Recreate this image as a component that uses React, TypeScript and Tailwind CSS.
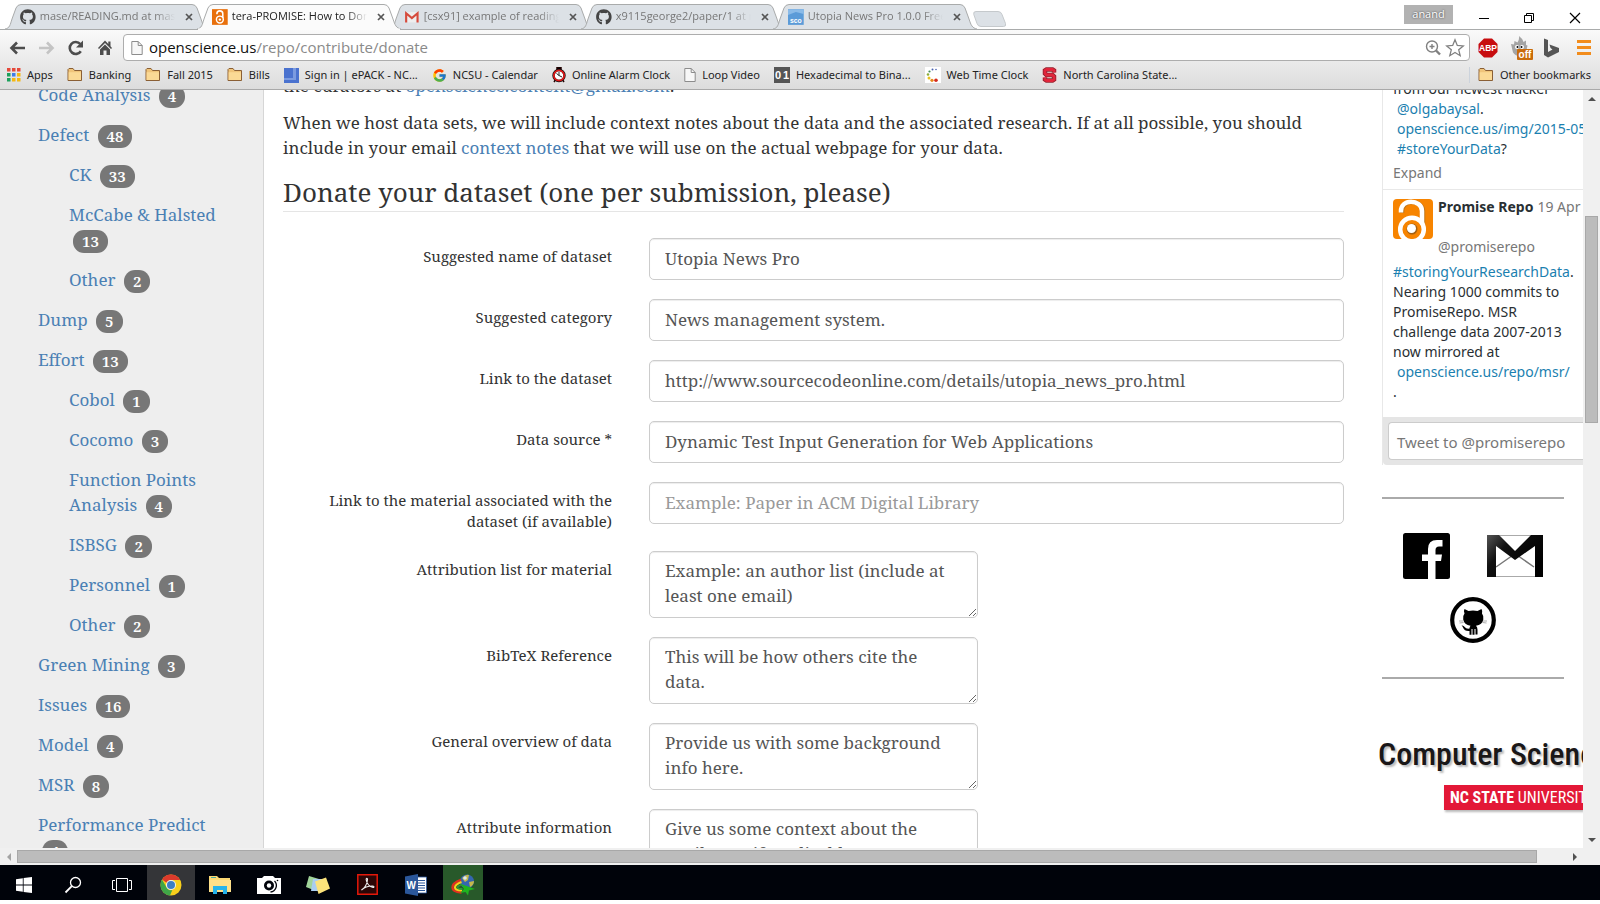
import React from 'react';
import { FaGithub } from 'react-icons/fa';
import { FcGoogle } from 'react-icons/fc';

/* ---------- small shared icons ---------- */

function FolderIcon() {
  return (
    <svg width="16" height="16" viewBox="0 0 16 16" aria-hidden="true">
      <path d="M1 4.500V2.500L2 1.500H6L7.500 3.500H14.500V13.500H1z" fill="#f0c47a" stroke="#8a5f35" strokeLinejoin="round" />
      <path d="M1.600 5.200h12.400v7.800H1.600z" fill="#fbd995" />
    </svg>
  );
}

function PageIcon() {
  return (
    <svg width="12" height="16" viewBox="0 0 12 16" aria-hidden="true">
      <path d="M.8 1.500h6.400l4 4v9H.8z" fill="#f7f7f7" stroke="#8c8c8c" />
      <path d="M7.200 1.500v4h4" fill="none" stroke="#8c8c8c" />
    </svg>
  );
}

function Avatar() {
  return (
    <svg className="rounded" width="40" height="40" viewBox="0 0 40 40" aria-hidden="true">
      <rect width="40" height="40" fill="#f78400" />
      <path d="M9 14V12.500C9 6.500 13.500 3 19 3S30 6.500 30 12.500V27" fill="none" stroke="#9a6a2a" strokeWidth="4.500" opacity=".6" />
      <path d="M8 13.500V12C8 6 12.500 2.800 18 2.800S29 6 29 12V27" fill="none" stroke="#fff" strokeWidth="4.500" />
      <circle cx="19" cy="30.500" r="11.800" fill="#f78400" stroke="#fff" strokeWidth="4.500" />
      <circle cx="19" cy="30" r="5.500" fill="#6a4a20" opacity=".6" />
      <circle cx="18.500" cy="29.500" r="4.500" fill="#fff" />
    </svg>
  );
}

function TabLockIcon() {
  return (
    <svg width="16" height="16" viewBox="0 0 16 16" aria-hidden="true">
      <rect width="16" height="16" fill="#e8700c" />
      <path d="M5 5.200V4.600a3 2.800 0 0 1 6 0V9" fill="none" stroke="#fff" strokeWidth="1.600" />
      <circle cx="8" cy="10.600" r="3.500" fill="none" stroke="#fff" strokeWidth="1.500" />
      <circle cx="8" cy="10.600" r="1.200" fill="#fff" />
    </svg>
  );
}

function GmailTabIcon() {
  return (
    <svg width="16" height="16" viewBox="0 0 16 16" aria-hidden="true">
      <path d="M1 3h14v10.500H1z" fill="#eee" />
      <path d="M2.200 13.500V4.200L8 9l5.800-4.800v9.300" fill="none" stroke="#d54b3d" strokeWidth="2.200" />
    </svg>
  );
}

function ScoIcon() {
  return (
    <svg width="16" height="16" viewBox="0 0 16 16" aria-hidden="true">
      <rect width="16" height="16" fill="#5b9bd8" />
      <path d="M0 0h16v5L8 3 0 6z" fill="#8bbbe8" />
      <text x="2" y="14" fontSize="7" fontWeight="700" fill="#fff" fontFamily="Liberation Sans, sans-serif">sco</text>
    </svg>
  );
}

/* ---------- tab strip ---------- */

const tabs = [
  { title: 'mase/READING.md at master', icon: <FaGithub size={16} color="#444" /> },
  { title: 'tera-PROMISE: How to Donate', icon: <TabLockIcon />, active: true },
  { title: '[csx91] example of reading', icon: <GmailTabIcon /> },
  { title: 'x9115george2/paper/1 at master', icon: <FaGithub size={16} color="#444" /> },
  { title: 'Utopia News Pro 1.0.0 Free', icon: <ScoIcon /> },
];

function TabStrip() {
  return (
    <div className="flex h-[30px] shrink-0 items-end border-b border-[#a9abab] bg-white pl-[5px]">
      {tabs.map((t) => (
        <div key={t.title} className={t.active ? 'relative z-10 h-[25px] w-48' : 'relative h-[25px] w-48'}>
          <svg className="absolute left-0 top-0" width="206" height="26" viewBox="0 0 206 26" aria-hidden="true">
            <path
              d="M0 25C5 24 5 21 7 15L11 4Q12.500.5 16 .5H187Q190.500.5 192 4L196 15C198 21 199 24 204 25"
              fill={t.active ? '#fbfbfb' : '#dce1e6'}
              stroke="#a9abab"
            />
            {t.active && <path d="M1 25.500H203" stroke="#fbfbfb" strokeWidth="2" />}
          </svg>
          <div className="relative flex h-full items-center pl-[15px]">
            {t.icon}
            <span
              className={
                t.active
                  ? 'ml-1 w-[138px] overflow-hidden whitespace-nowrap text-[#222] [mask-image:linear-gradient(to_right,#000_85%,transparent)]'
                  : 'ml-1 w-[138px] overflow-hidden whitespace-nowrap text-[#777] [mask-image:linear-gradient(to_right,#000_85%,transparent)]'
              }
            >
              {t.title}
            </span>
            <button aria-label="Close tab" className="ml-1.5 flex size-4 items-center justify-center">
              <svg width="8" height="8" viewBox="0 0 8 8" aria-hidden="true">
                <path d="M1 1l6 6M7 1 1 7" stroke="#555" strokeWidth="1.700" />
              </svg>
            </button>
          </div>
        </div>
      ))}
      <button aria-label="New tab" className="mb-0.5 ml-2">
        <svg width="34" height="16" viewBox="0 0 34 16" aria-hidden="true">
          <path d="M3 .5h22q3 0 4 3l3.500 9q1 3-2 3H8q-3 0-4-3L.8 3.500Q0 .5 3 .5z" fill="#dce1e6" stroke="#c5c9cc" />
        </svg>
      </button>
      <div className="ml-auto flex h-[29px] items-center pr-[17px]">
        <button className="mb-px h-[19px] w-[49px] bg-[#b2b2b2] text-[11px] leading-[18px] text-white [text-shadow:0_0_2px_#333]">anand</button>
        <button aria-label="Minimize" className="mt-1.5 ml-[23px] size-4">
          <svg width="16" height="16" viewBox="0 0 16 16" aria-hidden="true"><path d="M3 8.500h10" stroke="#000" /></svg>
        </button>
        <button aria-label="Restore" className="mt-1.5 ml-[29px] size-4">
          <svg width="16" height="16" viewBox="0 0 16 16" fill="none" stroke="#000" aria-hidden="true"><path d="M3.500 5.500h7v7h-7zM5.500 5.500v-2h7v7h-2" /></svg>
        </button>
        <button aria-label="Close" className="mt-1.5 ml-[30px] size-4">
          <svg width="16" height="16" viewBox="0 0 16 16" aria-hidden="true"><path d="M3 3l10 10M13 3 3 13" stroke="#000" strokeWidth="1.200" /></svg>
        </button>
      </div>
    </div>
  );
}

/* ---------- toolbar ---------- */

function Toolbar() {
  return (
    <div className="flex h-[35px] shrink-0 items-center pr-[9px] pl-[7px]">
      <div className="flex w-[116px] items-center gap-[9px] pl-px">
        <button aria-label="Back" className="size-5">
          <svg width="20" height="20" viewBox="0 0 20 20" fill="none" stroke="#4d4d4d" strokeWidth="2.600" aria-hidden="true"><path d="M17 10H4M9 4.500 3.500 10 9 15.500" /></svg>
        </button>
        <button aria-label="Forward" className="size-5">
          <svg width="20" height="20" viewBox="0 0 20 20" fill="none" stroke="#c4c4c4" strokeWidth="2.600" aria-hidden="true"><path d="M2 10h13M10 4.500l5.500 5.500-5.500 5.500" /></svg>
        </button>
        <button aria-label="Reload" className="size-5">
          <svg width="20" height="20" viewBox="0 0 20 20" aria-hidden="true"><path d="M14.800 13.200A6 6 0 1 1 14.300 6" fill="none" stroke="#4d4d4d" strokeWidth="2.600" /><path d="M17 2.500v7h-7z" fill="#4d4d4d" /></svg>
        </button>
        <button aria-label="Home" className="size-5">
          <svg width="20" height="20" viewBox="0 0 20 20" fill="#4d4d4d" aria-hidden="true"><path d="M10 2.500 3 10l1 1 6-6 6 6 1-1-1.500-1.700V3.500h-2.200v2.600z" /><path d="M10 6.500 5 11.500V17h3.500v-4.500h3V17H15v-5.500z" /></svg>
        </button>
      </div>
      <div className="flex h-[27px] min-w-0 flex-1 items-center rounded-sm border border-[#adadad] bg-white pr-1 pl-[7px]">
        <PageIcon />
        <div className="relative ml-1.5 h-full flex-1">
          <div className="pointer-events-none absolute inset-0 flex items-center text-[15px] text-[#8a8a8a]" aria-hidden="true">
            <span className="text-[#111]">openscience.us</span>/repo/contribute/donate
          </div>
          <input aria-label="Address" defaultValue="openscience.us/repo/contribute/donate" className="h-full w-full bg-transparent text-[15px] text-transparent outline-none" />
        </div>
        <svg width="18" height="18" viewBox="0 0 18 18" fill="none" stroke="#808080" strokeWidth="1.400" aria-hidden="true"><circle cx="8" cy="7.500" r="5.500" /><path d="M8 5v5M5.500 7.500h5" /><path d="M12 11.500l4 4" strokeWidth="2.400" /></svg>
        <svg className="ml-[3px]" width="20" height="20" viewBox="0 0 20 20" fill="#fff" stroke="#808080" strokeWidth="1.300" aria-hidden="true"><path d="M10 1.800l2.300 5.600 6 .5-4.600 3.900 1.500 5.900-5.200-3.200-5.200 3.200 1.500-5.900L1.700 7.900l6-.5z" /></svg>
      </div>
      <button aria-label="Adblock Plus" className="ml-2 size-5">
        <svg width="20" height="20" viewBox="0 0 20 20" aria-hidden="true"><path d="M6 .5h8L19.500 6v8L14 19.500H6L.5 14V6z" fill="#c70d0f" /><text x="10" y="13" textAnchor="middle" fontSize="8.500" fontWeight="700" fill="#fff" fontFamily="Liberation Sans, sans-serif">ABP</text></svg>
      </button>
      <button aria-label="Extension off" className="ml-3 h-6 w-6">
        <svg width="24" height="24" viewBox="0 0 24 24" aria-hidden="true">
          <path d="M1 8l3 .5L4.500 5l3 1.500Q9.500 4 9 0q4 3 4.500 6L16 4.500 16 9l1.500.5-1.500 7q-2.500 3.500-6.500 3.500T3 16.500z" fill="#a4a4a4" />
          <circle cx="7" cy="11" r="2" fill="#fff" /><circle cx="12" cy="11" r="2" fill="#fff" /><circle cx="7.500" cy="11" r="1" /><circle cx="11.500" cy="11" r="1" />
          <rect x="7" y="13" width="16" height="11" rx="1" fill="#c96b0a" />
          <text x="15" y="22" textAnchor="middle" fontSize="10" fontWeight="700" fill="#fff" fontFamily="Liberation Sans, sans-serif">off</text>
        </svg>
      </button>
      <button aria-label="Bing" className="ml-2 size-5">
        <svg width="20" height="20" viewBox="0 0 20 20" fill="#555" aria-hidden="true"><path d="M2 .5l4 1.500v12L2 17zM6 14l4.500-2.600L8.500 10 7.500 6.500 17 10v4L6 19.500 2 17z" /></svg>
      </button>
      <button aria-label="Menu" className="ml-[15px] flex h-5 w-[14px] flex-col justify-center gap-[3px]">
        <span className="h-[3px] bg-[#f28c1c]" /><span className="h-[3px] bg-[#f28c1c]" /><span className="h-[3px] bg-[#f28c1c]" />
      </button>
    </div>
  );
}

/* ---------- bookmarks bar ---------- */

const appColors = ['#e5493a', '#e5493a', '#e5493a', '#1ba05b', '#3f7de8', '#f5b811', '#1ba05b', '#f5b811', '#f5b811'];

const bookmarks = [
  {
    label: 'Apps',
    icon: (
      <svg width="14" height="14" viewBox="0 0 14 14" aria-hidden="true">
        {appColors.map((c, i) => <rect key={i} x={(i % 3) * 5} y={Math.floor(i / 3) * 5} width="3.500" height="3.500" fill={c} />)}
      </svg>
    ),
  },
  { label: 'Banking', icon: <FolderIcon /> },
  { label: 'Fall 2015', icon: <FolderIcon /> },
  { label: 'Bills', icon: <FolderIcon /> },
  {
    label: 'Sign in | ePACK - NC...',
    icon: <svg width="15" height="15" viewBox="0 0 15 15" aria-hidden="true"><path d="M0 0h15v15H0z" fill="#4a72cf" /><path d="M9 0h3v12H0v-2h9z" fill="#7b9be0" /></svg>,
  },
  { label: 'NCSU - Calendar', icon: <FcGoogle size={15} /> },
  {
    label: 'Online Alarm Clock',
    icon: (
      <svg width="14" height="16" viewBox="0 0 14 16" aria-hidden="true">
        <path d="M5 0h4v3H5zM2 15l2-3M12 15l-2-3" stroke="#200" strokeWidth="1.500" />
        <circle cx="7" cy="8.500" r="5.500" fill="#fff" stroke="#111" strokeWidth="2.400" />
        <circle cx="7" cy="8.500" r="5.200" fill="none" stroke="#e01818" strokeWidth="1.700" />
        <path d="M7 5v3.500l3 1.500M4.500 6.500 7 8.500" fill="none" stroke="#222" />
      </svg>
    ),
  },
  { label: 'Loop Video', icon: <PageIcon /> },
  {
    label: 'Hexadecimal to Bina...',
    icon: <svg width="16" height="16" viewBox="0 0 16 16" aria-hidden="true"><path d="M0 0h16v16H0z" fill="#555" /><text x="1" y="12" fontSize="11" fontWeight="700" fill="#fff" fontFamily="Liberation Sans, sans-serif">0</text><text x="9" y="12" fontSize="11" fontWeight="700" fill="#fff" fontFamily="Liberation Sans, sans-serif">1</text></svg>,
  },
  {
    label: 'Web Time Clock',
    icon: (
      <svg width="16" height="16" viewBox="0 0 16 16" aria-hidden="true">
        <path d="M0 0h16v16H0z" fill="#fff" />
        <circle cx="11" cy="2.500" r=".8" fill="#4a62b0" /><circle cx="7.500" cy="2.500" r="1" fill="#4a62b0" /><circle cx="4.500" cy="4.500" r="1.100" fill="#3f8a5a" />
        <circle cx="3" cy="7.500" r="1.300" fill="#8cae3a" /><circle cx="4" cy="11" r="1.500" fill="#e8c21c" /><circle cx="7" cy="13.300" r="1.600" fill="#e88a1c" /><circle cx="11" cy="13.300" r="1.800" fill="#d52b1e" />
      </svg>
    ),
  },
  {
    label: 'North Carolina State...',
    icon: (
      <svg width="15" height="16" viewBox="0 0 15 16" aria-hidden="true">
        <path d="M0 0h15v16H0z" fill="#f4dcdc" />
        <path d="M12 5.500V3.500L10.500 2.500h-6L3 3.500v3L4.500 8h6L12 9.500v3l-1.500 1h-6L3 12.500v-2" fill="none" stroke="#8a2530" strokeWidth="4.500" />
        <path d="M12 5.500V3.500L10.500 2.500h-6L3 3.500v3L4.500 8h6L12 9.500v3l-1.500 1h-6L3 12.500v-2" fill="none" stroke="#e2253a" strokeWidth="2.800" />
      </svg>
    ),
  },
];

function BookmarksBar() {
  return (
    <nav className="flex h-[25px] shrink-0 items-center border-b border-[#a9a9a9] pb-1 pl-[7px] font-['Noto_Sans','Open_Sans',sans-serif] text-[11px] text-[#222]">
      <div className="flex items-center gap-[14px]">
        {bookmarks.map((b) => (
          <a key={b.label} href="#" className="flex h-4 items-center gap-1.5 whitespace-nowrap">
            {b.icon}
            <span>{b.label}</span>
          </a>
        ))}
      </div>
      <a href="#" className="mr-[9px] ml-auto flex h-4 items-center gap-1.5 border-l border-[#ccd3dc] pl-2">
        <FolderIcon />
        <span>Other bookmarks</span>
      </a>
    </nav>
  );
}

/* ---------- left category list ---------- */

const categories: { name: string; count: number; sub?: boolean }[] = [
  { name: 'Code Analysis', count: 4 },
  { name: 'Defect', count: 48 },
  { name: 'CK', count: 33, sub: true },
  { name: 'McCabe & Halsted', count: 13, sub: true },
  { name: 'Other', count: 2, sub: true },
  { name: 'Dump', count: 5 },
  { name: 'Effort', count: 13 },
  { name: 'Cobol', count: 1, sub: true },
  { name: 'Cocomo', count: 3, sub: true },
  { name: 'Function Points Analysis', count: 4, sub: true },
  { name: 'ISBSG', count: 2, sub: true },
  { name: 'Personnel', count: 1, sub: true },
  { name: 'Other', count: 2, sub: true },
  { name: 'Green Mining', count: 3 },
  { name: 'Issues', count: 16 },
  { name: 'Model', count: 4 },
  { name: 'MSR', count: 8 },
  { name: 'Performance Predict', count: 4 },
];

function Sidebar() {
  return (
    <aside className="w-[264px] shrink-0 overflow-hidden border-r border-[#d6d6d6] bg-[#eee]">
      <ul className="-mt-2 flex flex-col gap-[15px] pr-6 pl-[38px]">
        {categories.map((c, i) => (
          <li key={i} className={c.sub ? 'pl-[31px]' : ''}>
            <a href="#" className="block text-[#4a80b4]">
              {c.name}{' '}
              <span className="-my-1 ml-1 inline-block rounded-[11px] bg-[#777] px-[9px] text-center align-middle text-[15px] leading-[23px] font-semibold text-white">{c.count}</span>
            </a>
          </li>
        ))}
      </ul>
    </aside>
  );
}

/* ---------- donation form ---------- */

const fields = [
  { id: 'name', label: 'Suggested name of dataset', value: 'Utopia News Pro' },
  { id: 'category', label: 'Suggested category', value: 'News management system.' },
  { id: 'link', label: 'Link to the dataset', value: 'http://www.sourcecodeonline.com/details/utopia_news_pro.html' },
  { id: 'source', label: 'Data source *', value: 'Dynamic Test Input Generation for Web Applications' },
  { id: 'material', label: 'Link to the material associated with the dataset (if available)', placeholder: 'Example: Paper in ACM Digital Library' },
];

const areas = [
  { id: 'attribution', label: 'Attribution list for material', value: 'Example: an author list (include at least one email)' },
  { id: 'bibtex', label: 'BibTeX Reference', value: 'This will be how others cite the data.' },
  { id: 'overview', label: 'General overview of data', value: 'Provide us with some background info here.' },
  { id: 'attributes', label: 'Attribute information', value: 'Give us some context about the attributes, if applicable.' },
];

function DonateForm() {
  return (
    <form className="mt-[26px]">
      {fields.map((f) => (
        <div key={f.id} className="mb-[19px] flex items-start gap-[37px]">
          <label htmlFor={f.id} className="w-[329px] shrink-0 pt-2 pl-[30px] text-right text-[15px] leading-[21px]">{f.label}</label>
          <input
            id={f.id}
            defaultValue={f.value}
            placeholder={f.placeholder}
            className="h-[42px] min-w-0 flex-1 rounded-[5px] border border-[#ccc] bg-white px-[15px] pb-[2px] text-[#555] shadow-[inset_0_1px_1px_rgba(0,0,0,0.075)] placeholder:text-[#999]"
          />
        </div>
      ))}
      {areas.map((f) => (
        <div key={f.id} className="mb-[19px] flex items-start gap-[37px]">
          <label htmlFor={f.id} className="w-[329px] shrink-0 pt-2 text-right text-[15px] leading-[21px]">{f.label}</label>
          <textarea
            id={f.id}
            defaultValue={f.value}
            className="block h-[67px] w-[329px] resize overflow-hidden rounded-[5px] border border-[#ccc] bg-white py-1.5 pr-6 pl-[15px] leading-[25px] text-[#555] shadow-[inset_0_1px_1px_rgba(0,0,0,0.075)]"
          />
        </div>
      ))}
    </form>
  );
}

function Main() {
  return (
    <main className="min-w-0 flex-1 overflow-hidden pl-[19px]">
      <p className="-mt-[17px] mb-3">the curators at <a href="#" className="text-[#4a80b4]">openscience.content@gmail.com</a>.</p>
      <p className="mb-3">
        When we host data sets, we will include context notes about the data and the associated research. If at all possible, you should
        include in your email <a href="#" className="text-[#4a80b4]">context notes</a> that we will use on the actual webpage for your data.
      </p>
      <h2 className="border-b border-[#e5e5e5] pt-px text-[26px] leading-[38px]">Donate your dataset (one per submission, please)</h2>
      <DonateForm />
    </main>
  );
}

/* ---------- right column ---------- */

function RightColumn() {
  return (
    <aside className="w-[205px] shrink-0 overflow-hidden pl-1">
      <section className="border-l border-[#e8e8e8] font-['Noto_Sans','Open_Sans',sans-serif] text-[14px] leading-5 whitespace-nowrap text-[#292f33]">
        <div className="border-b border-[#e8e8e8] pb-[6px] pl-[10px]">
          <p className="-mt-[11px]">from our newest hacker</p>
          <p className="pl-1"><a href="#" className="text-[#1b7fb0]">@olgabaysal</a>.</p>
          <p className="pl-1"><a href="#" className="text-[#1b7fb0]">openscience.us/img/2015-05</a></p>
          <p className="pl-1"><a href="#" className="text-[#1b7fb0]">#storeYourData</a>?</p>
          <p className="mt-1"><a href="#" className="text-[#777]">Expand</a></p>
        </div>
        <div className="pt-[9px] pl-[10px]">
          <div className="flex h-[63px] gap-[5px]">
            <Avatar />
            <div className="flex-1">
              <div className="mt-[-2px] flex items-baseline gap-1"><b className="font-bold">Promise Repo</b><span className="text-[#777]">19 Apr</span></div>
              <div className="mt-5 text-[#777]">@promiserepo</div>
            </div>
          </div>
          <p><a href="#" className="text-[#1b7fb0]">#storingYourResearchData</a>.</p>
          <p>Nearing 1000 commits to<br />PromiseRepo. MSR<br />challenge data 2007-2013<br />now mirrored at</p>
          <p className="pl-1"><a href="#" className="text-[#1b7fb0]">openscience.us/repo/msr/</a></p>
          <p>.</p>
        </div>
        <div className="mt-[15px] rounded-bl bg-[#e5e5e5] py-[5px] pl-[5px]">
          <button className="h-[38px] w-full rounded-l border border-r-0 border-[#ccc] bg-white pt-0.5 pl-2 text-left text-[15px] text-[#777]">Tweet to @promiserepo</button>
        </div>
      </section>
      <hr className="mt-8 mr-[19px] border-t-2 border-[#aaa]" />
      <div className="mr-[19px] flex flex-wrap items-center justify-center gap-x-[37px] gap-y-[18px] pt-[34px]">
        <a href="#" aria-label="Facebook">
          <svg width="47" height="46" viewBox="0 0 47 46" aria-hidden="true">
            <rect width="47" height="46" rx="2.500" />
            <path d="M25 46V28h-6v-6.500h6V16q0-9 9-9h5.500v6.500H36q-3.500 0-3.500 3.500v4.500H39L38 28h-5.500v18z" fill="#fff" />
          </svg>
        </a>
        <a href="#" aria-label="Gmail">
          <svg width="56" height="42" viewBox="0 0 56 42" aria-hidden="true">
            <path d="M.5.5h55v41H.5z" fill="#fff" stroke="#aaa" />
            <path d="M9 32 24 21.500M47 32 32 21.500" stroke="#777" strokeWidth="1.500" />
            <path d="M0 0h12l16 16L44 0h12v42h-8V11L28 25 9 11v31H0z" fill="url(#env)" />
            <defs><linearGradient id="env" x1="0" y1="0" x2="1" y2=".6"><stop offset="0" stopColor="#555" /><stop offset=".35" stopColor="#111" /><stop offset="1" stopColor="#000" /></linearGradient></defs>
          </svg>
        </a>
        <a href="#" aria-label="GitHub">
          <svg width="46" height="46" viewBox="0 0 46 46" aria-hidden="true">
            <circle cx="23" cy="23" r="20.800" fill="#fff" stroke="#000" strokeWidth="4.200" />
            <path d="M14.500 12l4 2q4.500-1 9 0l4-2q1.200 2 .5 4.500 2 2.500 1.300 6-1 5.500-7.300 6.200 1.500 1.500 1.500 4V37.500h-2V32h-1v5.800h-2V32h-1v5.800h-2V34q-5 .5-6.500-3.500-.6-1.500-1.500-2 2-.5 3.200 1.500 1.600 2.300 4.800 1.600.1-1.800 1-2.900-6.300-.7-7.300-6.200-.7-3.500 1.300-6Q13.300 14 14.500 12z" fill="#000" />
            <path d="M9 24h4M9.500 26l4-.5M33 24h4M32.500 25.500l4 .5" stroke="#888" strokeWidth=".700" />
          </svg>
        </a>
      </div>
      <hr className="mt-[34px] mr-[19px] border-t-2 border-[#aaa]" />
      <div className="-ml-1 pt-11 whitespace-nowrap">
        <div className="font-['Roboto_Condensed','DejaVu_Sans_Condensed',sans-serif] text-[32px] leading-[62px] font-medium text-[#1a1718] [text-shadow:2px_2px_2px_#bbb]">Computer Science</div>
        <div className="ml-[66px] h-[25px] bg-[#e31837] pl-1.5 font-['Roboto_Condensed','Roboto',sans-serif] text-[16px] leading-[26px] text-white shadow-[1px_2px_2px_#bbb]"><b>NC STATE</b> UNIVERSITY</div>
      </div>
    </aside>
  );
}

/* ---------- scroll bars ---------- */

function Arrow({ d, label, dim }: { d: string; label: string; dim?: boolean }) {
  return (
    <button aria-label={label} className="flex size-[17px] shrink-0 items-center justify-center">
      <svg width="8" height="8" viewBox="0 0 8 8" aria-hidden="true"><path d={d} fill={dim ? '#a3a3a3' : '#505050'} /></svg>
    </button>
  );
}

/* ---------- task bar ---------- */

const tasks = [
  { label: 'Start', icon: <svg width="16" height="16" viewBox="0 0 16 16" fill="#fff" aria-hidden="true"><path d="M0 2.200 6.800 1.200V7.600H0zM7.600 1.100 16 0V7.600H7.600zM0 8.400H6.800V14.800L0 13.800zM7.600 8.400H16V16L7.600 14.900z" /></svg> },
  { label: 'Search', icon: <svg width="18" height="18" viewBox="0 0 18 18" fill="none" stroke="#fff" aria-hidden="true"><circle cx="11.500" cy="6.500" r="5" strokeWidth="1.300" /><path d="M7.800 10.200 1.500 16.500" strokeWidth="1.800" /></svg> },
  { label: 'Task view', icon: <svg width="20" height="16" viewBox="0 0 20 16" fill="none" stroke="#fff" aria-hidden="true"><path d="M4.500 1.500h11v13h-11zM3 3.500H.5v9H3M17 3.500h2.500v9H17" /></svg> },
  {
    label: 'Chrome', cell: 'w-12 bg-[#343538]',
    icon: (
      <svg width="22" height="22" viewBox="0 0 22 22" aria-hidden="true">
        <circle cx="11" cy="11" r="10.500" fill="#f8cf1c" />
        <path d="M11 .5A10.500 10.500 0 0 1 20.200 6H11a5 5 0 0 0-4.500 2.800L2 5.500A10.500 10.500 0 0 1 11 .5z" fill="#dc3a2c" />
        <path d="M2 5.500 6.600 13.500A5 5 0 0 0 12.300 16L10 21.500A10.500 10.500 0 0 1 2 5.500z" fill="#3fa648" />
        <circle cx="11" cy="11" r="5" fill="#f2f2f2" /><circle cx="11" cy="11" r="4" fill="#3d7ec4" />
      </svg>
    ),
  },
  { label: 'File Explorer', icon: <svg width="22" height="18" viewBox="0 0 22 18" aria-hidden="true"><path d="M0 0h8l2 2h11v14H0z" fill="#fbd873" /><path d="M0 4h22v12H0z" fill="#fde08a" /><path d="M2 1.500h5" stroke="#4aa8a0" /><path d="M4 18v-8h14v8h-4v-4H8v4z" fill="#25b4ec" /></svg> },
  { label: 'Camera', icon: <svg width="24" height="20" viewBox="0 0 24 20" aria-hidden="true"><path d="M0 3h5l2-2h9l2 2h6v16H0z" fill="#fff" /><circle cx="12" cy="10.500" r="5" fill="#00030a" /><path d="M17.500 6a6.500 6.500 0 0 1-4 11" fill="none" stroke="#00030a" strokeWidth="1.300" /><circle cx="12" cy="10.500" r="2.200" fill="#fff" /><circle cx="20.500" cy="5.500" r=".8" /></svg> },
  { label: 'Sticky Notes', icon: <svg width="24" height="20" viewBox="0 0 24 20" aria-hidden="true"><path d="M3 1l10 3-3 12-10-4z" fill="#a0d49a" /><path d="M7 4h11v12H5z" fill="#a9cdf0" /><path d="M9 6.500l11-4 4 11-11.500 5.500z" fill="#fbe27a" /></svg> },
  { label: 'Acrobat', icon: <svg width="21" height="21" viewBox="0 0 21 21" aria-hidden="true"><path d="M.8.8h19.400v19.400H.8z" fill="#2a0606" stroke="#e2180a" strokeWidth="1.500" /><path d="M4.500 16c2.500-1 6-6 6-10.500 0-1.500-1.500-1.500-1.300.2.300 3.300 3.300 7.500 6.800 7.800 1.500 0 1.200-1.400-.7-1.500-3.500 0-8 1.300-10.800 4z" fill="none" stroke="#eee" strokeWidth="1.100" /></svg> },
  { label: 'Word', icon: <svg width="22" height="22" viewBox="0 0 22 22" aria-hidden="true"><path d="M11 3h10.500v16H11z" fill="#fff" stroke="#2b579a" strokeWidth=".800" /><path d="M13 6.500h7M13 9h7M13 11.500h7M13 14h7M13 16.500h7" stroke="#2b579a" /><path d="M0 2.500 13 0v22L0 19.500z" fill="#2b579a" /><text x="6.300" y="14.800" textAnchor="middle" fontSize="10" fontWeight="700" fill="#fff" fontFamily="Liberation Sans, sans-serif">W</text></svg> },
  {
    label: 'Download Manager', cell: 'ml-0.5 w-10 bg-[#28592a]',
    icon: (
      <svg width="24" height="22" viewBox="0 0 24 22" aria-hidden="true">
        <circle cx="16" cy="7.500" r="7" fill="#3566b0" /><path d="M11 4q4-4 7-3l-1 5-3 2zM18 8l5-1q0 4-4 6z" fill="#c4b84a" /><circle cx="14" cy="4" r="1.800" fill="#dbe8f5" />
        <path d="M10 6Q1.500 9 1.500 13.500t9 5" fill="none" stroke="#e0301e" strokeWidth="2.400" />
        <path d="M10.500 8Q4 10.500 4 13.500t7 3" fill="none" stroke="#f5d21c" strokeWidth="2.200" />
        <path d="M11 10.500Q6.500 12 6.500 13.500t5 1.500" fill="none" stroke="#2f9a3a" strokeWidth="1.800" />
        <path d="M10 10l14 5-6 1.500-1 5-2.500-3.500-5.500 1 4-4z" fill="#1fb41f" />
      </svg>
    ),
  },
];

export default function App() {
  return (
    <div className="flex h-screen flex-col overflow-hidden bg-white pb-1 font-['Open_Sans','Noto_Sans',sans-serif] text-[11px]">
      <TabStrip />
      <header className="flex shrink-0 flex-col bg-linear-to-b from-[#fafafa] to-[#dcdcdc]">
        <Toolbar />
        <BookmarksBar />
      </header>

      <div className="flex min-h-0 flex-1">
        <div className="flex min-w-0 flex-1 overflow-hidden font-['Noto_Serif','DejaVu_Serif',serif] text-[17px] leading-[25px] text-[#333]">
          <Sidebar />
          <Main />
          <div className="w-[34px] shrink-0" />
          <RightColumn />
        </div>
        <div className="flex w-[17px] shrink-0 flex-col bg-[#f0f0f0]">
          <Arrow label="Scroll up" d="M0 6l4-4 4 4z" />
          <div className="flex-[109]" />
          <div className="mx-[2px] flex-[206] border border-[#a8a8a8] bg-[#bcbcbc]" />
          <div className="flex-[409]" />
          <Arrow label="Scroll down" d="M0 2l4 4 4-4z" />
        </div>
      </div>

      <div className="flex h-[17px] shrink-0 bg-[#f0f0f0] pr-[17px]">
        <Arrow label="Scroll left" d="M6 0L2 4l4 4z" dim />
        <div className="my-[2px] flex-1 border border-[#a8a8a8] bg-[#bcbcbc]" />
        <div className="w-[29px]" />
        <Arrow label="Scroll right" d="M2 0l4 4-4 4z" />
      </div>

      <footer className="flex h-[35px] shrink-0 gap-px bg-[#00030a]">
        {tasks.map((t) => (
          <button key={t.label} aria-label={t.label} className={t.cell ? `flex items-center justify-center pt-1 ${t.cell}` : 'flex w-12 items-center justify-center pt-1'}>
            {t.icon}
          </button>
        ))}
      </footer>
    </div>
  );
}
